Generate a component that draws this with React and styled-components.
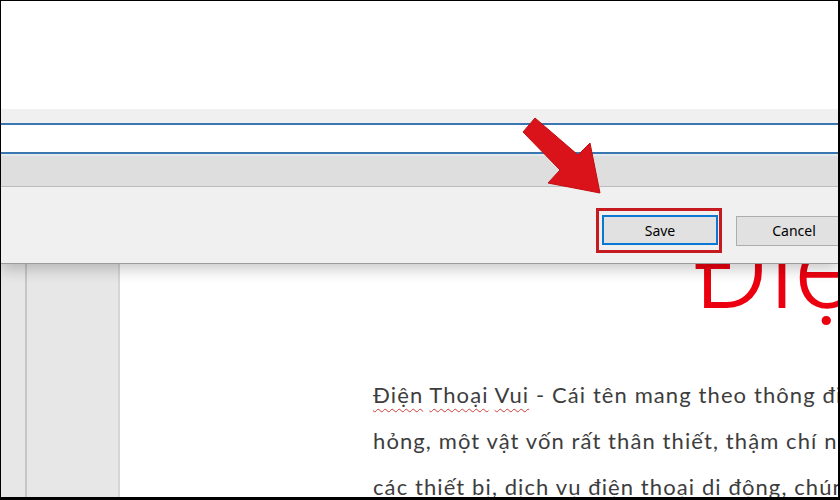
import React from 'react';
import styled, {createGlobalStyle} from 'styled-components';

const GlobalStyle = createGlobalStyle`
    body {
        margin: 0;
        background: #fff;
    }
`;

const Frame = styled.div`
    background: #fff;
    border-color: #000;
    border-style: solid;
    border-width: 1px 2px 3px 1px;
    box-sizing: border-box;
    display: flex;
    flex-direction: column;
    height: 500px;
    overflow: hidden;
    position: relative;
    width: 840px;
`;

const Dialog = styled.div`
    box-shadow: 0 5px 14px rgba(0, 0, 0, 0.22);
    display: flex;
    flex-direction: column;
    flex-shrink: 0;
    position: relative;
    z-index: 1;
`;

const BlankArea = styled.div`
    background: #fff;
    height: 108px;
`;

const Strip = styled.div`
    background: #f0f0f0;
    height: 14px;
`;

const NameField = styled.div`
    background: #fff;
    border-bottom: 2px solid #3a76b0;
    border-top: 2px solid #3a76b0;
    height: 27px;
`;

const FieldGlow = styled.div`
    background: #e4e9ee;
    height: 2px;
`;

const Band = styled.div`
    background: #dedede;
    border-bottom: 1px solid #bcbcbc;
    height: 30px;
`;

const ButtonPanel = styled.div`
    align-items: flex-start;
    background: #f0f0f0;
    border-bottom: 1px solid #9c9c9c;
    box-sizing: border-box;
    display: flex;
    height: 77px;
    justify-content: flex-end;
    padding-top: 21px;
`;

const ButtonRow = styled.div`
    align-items: center;
    display: flex;
    gap: 14px;
    margin-right: -14px;
`;

const Highlight = styled.div`
    border: 3px solid #c41a20;
    display: flex;
    padding: 4px 1px 5px 3px;
`;

const Button = styled.button`
    align-items: center;
    background: #e1e1e1;
    border: ${({$focused}) => ($focused ? '2px solid #0a78d2' : '1px solid #adadad')};
    box-sizing: border-box;
    color: #000;
    display: flex;
    flex-shrink: 0;
    font-family: "Noto Sans", "Open Sans", sans-serif;
    font-size: 14px;
    height: 30px;
    justify-content: center;
    padding: 0;
    width: 116px;
`;

const Document = styled.div`
    display: flex;
    flex: 1;
    min-height: 0;
`;

const Gutter = styled.div`
    background: #e7e7e7;
    border-right: 2px solid ${({$line}) => $line};
    flex-shrink: 0;
    width: ${({$width}) => $width}px;
`;

const Page = styled.div`
    background: #fff;
    flex: 1;
    overflow: hidden;
    padding-left: 253px;
`;

const Heading = styled.div`
    color: #ec0010;
    font-family: Roboto, "Open Sans", sans-serif;
    font-size: 115px;
    font-weight: 300;
    line-height: 115px;
    margin-top: -53px;
    padding-left: 319px;
    white-space: nowrap;
`;

const Body = styled.p`
    color: #3d3d3d;
    font-family: Lato, "Open Sans", sans-serif;
    font-size: 22px;
    letter-spacing: 1.1px;
    line-height: 46px;
    margin: 46px 0 0;
    white-space: nowrap;
`;

const Misspelled = styled.span`
    text-decoration: underline wavy #d23c3c;
    text-decoration-thickness: 1px;
    text-underline-offset: 5px;
`;

const Arrow = styled.svg`
    left: 514px;
    position: absolute;
    top: 111px;
    z-index: 2;
`;

const App = () => (
    <Frame>
        <GlobalStyle />

        <Dialog>
            <BlankArea />
            <Strip />
            <NameField />
            <FieldGlow />
            <Band />
            <ButtonPanel>
                <ButtonRow>
                    <Highlight>
                        <Button $focused>Save</Button>
                    </Highlight>
                    <Button>Cancel</Button>
                </ButtonRow>
            </ButtonPanel>
        </Dialog>

        <Document>
            <Gutter $width={24} $line="#c6c6c6" />
            <Gutter $width={91} $line="#d6d6d6" />
            <Page>
                <Heading>Điện Thoại Vui</Heading>
                <Body>
                    <Misspelled>Điện</Misspelled> <Misspelled>Thoại</Misspelled> <Misspelled>Vui</Misspelled> - Cái tên mang theo thông điệp
                    <br />
                    hỏng, một vật vốn rất thân thiết, thậm chí như
                    <br />
                    các thiết bị, dịch vụ điện thoại di động, chúng
                </Body>
            </Page>
        </Document>

        <Arrow width="90" height="86" viewBox="0 0 90 86">
            <polygon
                points="20,6 63,43 75,31 85,81 33,71 45,58 8,20"
                fill="#da1219"
                stroke="#c20e14"
                strokeWidth="1"
                strokeLinejoin="round"
            />
        </Arrow>
    </Frame>
);

export default App;
